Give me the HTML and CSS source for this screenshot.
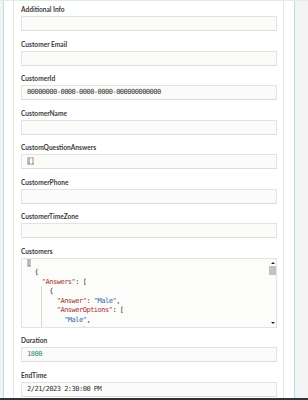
FILE: index.html
```html
<!DOCTYPE html>
<html>

<head>
    <meta charset="utf-8">
    <title>Edit appointment</title>
    <meta name="viewport" content="width=device-width, initial-scale=1">
    <link rel="stylesheet" href="styles.css">
</head>

<body>
    <div class="alert-edge"></div>

    <div class="frame">
        <div class="panel">
            <div class="field">
                <label class="field-label">Additional Info</label>
                <div class="field-input"></div>
            </div>
            <div class="field">
                <label class="field-label">Customer Email</label>
                <div class="field-input"></div>
            </div>
            <div class="field">
                <label class="field-label">CustomerId</label>
                <div class="field-input">00000000-0000-0000-0000-000000000000</div>
            </div>
            <div class="field">
                <label class="field-label">CustomerName</label>
                <div class="field-input"></div>
            </div>
            <div class="field">
                <label class="field-label">CustomQuestionAnswers</label>
                <div class="field-input"><span class="match">[]</span></div>
            </div>
            <div class="field">
                <label class="field-label">CustomerPhone</label>
                <div class="field-input"></div>
            </div>
            <div class="field">
                <label class="field-label">CustomerTimeZone</label>
                <div class="field-input"></div>
            </div>
            <div class="field">
                <label class="field-label">Customers</label>
                <div class="code-box">
                    <pre class="code"><span class="match">[</span>
  {
    <span class="key">"Answers"</span>: [
<span class="ind">    </span>  {
<span class="ind">    </span>    <span class="key">"Answer"</span>: <span class="str">"Male"</span>,
<span class="ind">    </span>    <span class="key">"AnswerOptions"</span>: [
<span class="ind">    </span>      <span class="str">"Male"</span>,
<span class="ind">    </span>      <span class="str">"Female"</span></pre>
                    <div class="scrollbar">
                        <span class="arrow up"></span>
                        <span class="thumb"></span>
                        <span class="track"></span>
                        <span class="arrow down"></span>
                    </div>
                </div>
            </div>
            <div class="field">
                <label class="field-label">Duration</label>
                <div class="field-input"><span class="num">1800</span></div>
            </div>
            <div class="field">
                <label class="field-label">EndTime</label>
                <div class="field-input">2/21/2023 2:30:00 PM</div>
            </div>
        </div>
    </div>

    <div class="taskbar"></div>
</body>

</html>
```

FILE: styles.css
```css
* {
    margin: 0;
    padding: 0;
    box-sizing: border-box;
}

html,
body {
    width: 100%;
    height: 100%;
    overflow: hidden;
    background: #f3f3f3;
}

body {
    font-family: "Lato", "Open Sans", sans-serif;
    color: #3a3a3a;
}

.alert-edge {
    height: 1px;
    background: #dcf1dc;
}

.frame {
    width: 292px;
    margin-left: 3px;
    min-height: 420px;
    padding: 0 10px 0 9px;
    background: #fff;
    border-left: 1px solid #b9dce7;
    border-right: 1px solid #b9dce7;
}

.panel {
    min-height: 420px;
    padding: 3px 6px 0 7px;
    border-left: 1px solid #e6e6e6;
    border-right: 1px solid #e6e6e6;
}

.field {
    margin-bottom: 7.5px;
}

.field-label {
    display: block;
    height: 10px;
    margin-bottom: 2px;
    font-size: 6.6px;
    line-height: 10px;
    font-weight: 700;
    color: #3b3b3b;
}

.field-input,
.code {
    font-family: "DejaVu Sans Mono", "Liberation Mono", monospace;
    font-size: 7px;
    letter-spacing: -0.5px;
    color: #333;
}

.field-input {
    height: 15px;
    padding: 1px 0 0 5px;
    line-height: 10px;
    white-space: pre;
    background: #fbfbf9;
    border: 1px solid #e3e3e1;
    border-bottom-color: #dcdcda;
}

.match {
    outline: 1px solid #c4c4c4;
    outline-offset: -1px;
}

.num {
    color: #2e8b74;
}

.key {
    color: #a8322d;
}

.str {
    color: #3565a8;
}

.code-box {
    display: flex;
    height: 70px;
    background: #fcfcfb;
    border: 1px solid #e3e3e1;
    overflow: hidden;
}

.code {
    flex: 1;
    padding: 0 0 0 5px;
    line-height: 9.6px;
    white-space: pre;
    overflow: hidden;
}

.ind {
    display: inline-block;
    height: 9.6px;
    vertical-align: top;
    box-shadow: inset -1px 0 0 #d8d8d8;
}

.scrollbar {
    width: 7px;
    display: flex;
    flex-direction: column;
    align-items: center;
}

.arrow {
    width: 0;
    height: 0;
    border-left: 2px solid transparent;
    border-right: 2px solid transparent;
}

.arrow.up {
    margin-top: 3px;
    border-bottom: 2px solid #222;
}

.arrow.down {
    margin-bottom: 3px;
    border-top: 2px solid #222;
}

.thumb {
    width: 7px;
    height: 9px;
    margin-top: 2px;
    background: #c2c2c2;
}

.track {
    flex: 1;
}

.taskbar {
    position: fixed;
    left: 0;
    right: 0;
    bottom: 0;
    height: 2px;
    background: #2f3439;
}
```
